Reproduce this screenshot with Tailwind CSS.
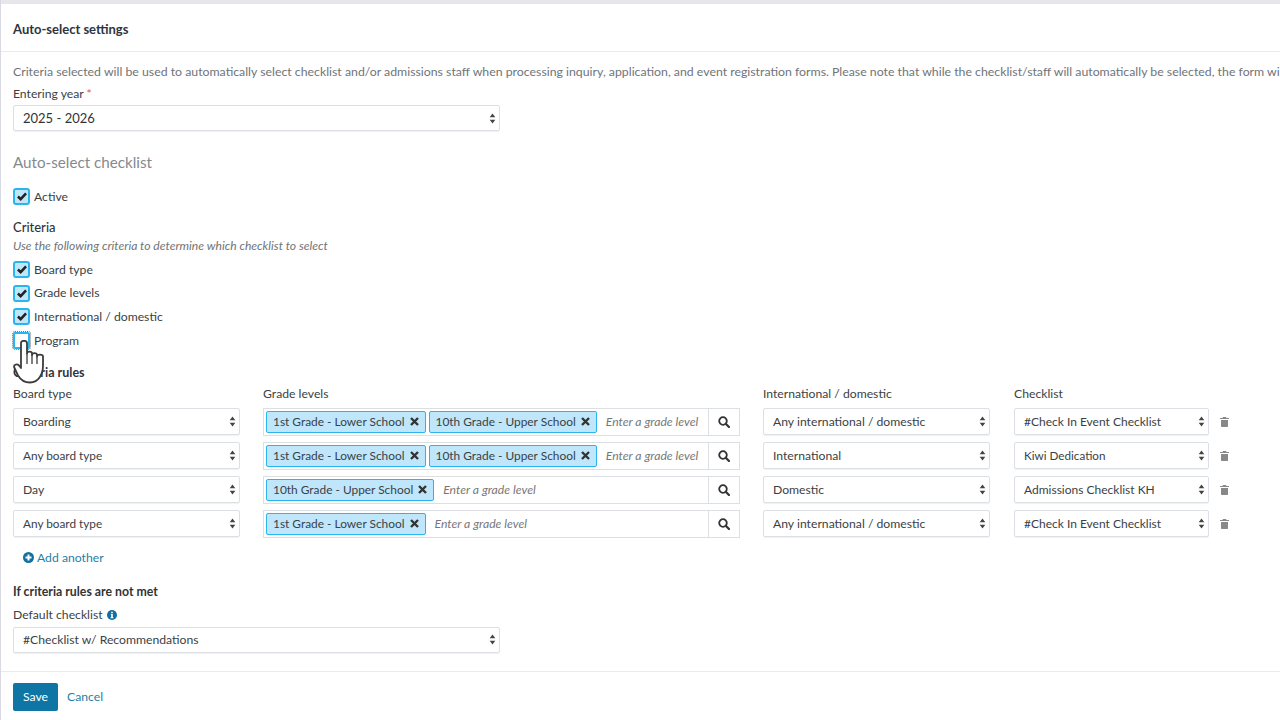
<!DOCTYPE html>
<html lang="en">
<head>
<meta charset="utf-8">
<title>Auto-select settings</title>
<script src="https://cdn.jsdelivr.net/npm/@tailwindcss/browser@4"></script>
</head>
<body class="bg-white">
<div class="relative w-[1280px] h-[720px] overflow-hidden font-['Lato',sans-serif] text-[12.2px] text-[#3a3f45] bg-white border-l border-[#d9d9e3]">
  <div class="h-1 bg-[#e6e6eb] -ml-px"></div>
  <header class="h-[48px] flex items-center pl-3 pt-[4px] border-b border-[#ebebee] font-bold text-[#2d3540] text-[13px]">Auto-select settings</header>

  <main class="pl-3">
    <p class="h-[34px] pt-[11px] leading-[17px] whitespace-nowrap text-[12.3px] text-[#6f7479]">Criteria selected will be used to automatically select checklist and/or admissions staff when processing inquiry, application, and event registration forms. Please note that while the checklist/staff will automatically be selected, the form will not be</p>
    <div class="h-[16px] leading-[16px]">Entering year <span class="text-[#e2504c]">*</span></div>
    <div class="mt-[3px] w-[487px] h-[26px] flex items-center justify-between pl-[9px] pr-[3px] border border-[#dcdfe3] rounded-[2px] shadow-[0_1px_1px_#0000000f] text-[13px] text-[#333]">
      <span class="pt-px">2025 - 2026</span>
      <svg class="w-[7px] h-[11px]" viewBox="0 0 7 11"><path fill="#444" d="M3.5 0.5 6.3 4.3H.7zM3.500 10.500 .7 6.700H6.300z"/></svg>
    </div>

    <h2 class="mt-[21px] h-[20px] leading-[20px] text-[15.2px] text-[#858a8f]">Auto-select checklist</h2>

    <label class="mt-[16px] h-[17px] flex items-center gap-[4px]">
      <span class="w-[17px] h-[17px] flex items-center justify-center bg-[#bfe6fb] border-2 border-[#2bb5ef] rounded-[3px]"><svg class="w-[10px] h-[9px]" viewBox="0 0 11 10"><path fill="none" stroke="#222" stroke-width="2.8" d="M1 5l3 3 6-6.500"/></svg></span>
      <span class="pt-px">Active</span>
    </label>

    <div class="mt-[14px] h-[17px] leading-[17px] font-medium text-[13px] text-[#2f353b]">Criteria</div>
    <p class="mt-[1px] h-[17px] leading-[17px] italic text-[12.1px] text-[#6f7479]">Use the following criteria to determine which checklist to select</p>

    <div class="mt-[7px] flex flex-col gap-[6.6px]">
      <label class="h-[17px] flex items-center gap-[4px]"><span class="w-[17px] h-[17px] flex items-center justify-center bg-[#bfe6fb] border-2 border-[#2bb5ef] rounded-[3px]"><svg class="w-[10px] h-[9px]" viewBox="0 0 11 10"><path fill="none" stroke="#222" stroke-width="2.8" d="M1 5l3 3 6-6.500"/></svg></span><span class="pt-px">Board type</span></label>
      <label class="h-[17px] flex items-center gap-[4px]"><span class="w-[17px] h-[17px] flex items-center justify-center bg-[#bfe6fb] border-2 border-[#2bb5ef] rounded-[3px]"><svg class="w-[10px] h-[9px]" viewBox="0 0 11 10"><path fill="none" stroke="#222" stroke-width="2.8" d="M1 5l3 3 6-6.500"/></svg></span><span class="pt-px">Grade levels</span></label>
      <label class="h-[17px] flex items-center gap-[4px]"><span class="w-[17px] h-[17px] flex items-center justify-center bg-[#bfe6fb] border-2 border-[#2bb5ef] rounded-[3px]"><svg class="w-[10px] h-[9px]" viewBox="0 0 11 10"><path fill="none" stroke="#222" stroke-width="2.8" d="M1 5l3 3 6-6.500"/></svg></span><span class="pt-px">International / domestic</span></label>
      <label class="h-[17px] flex items-center gap-[4px]"><span class="w-[17px] h-[17px] bg-white border-2 border-[#2bb5ef] outline-1 outline-dotted outline-[#777] rounded-[2px]"></span><span class="pt-px">Program</span></label>
    </div>

    <div class="mt-[15px] h-[17px] leading-[17px] font-bold text-[12.5px] text-[#2f353b]">Criteria rules</div>

    <div class="mt-[5px] flex flex-col gap-[7px] w-[1240px]">
      <div class="flex h-[15px] leading-[16px]">
        <div class="w-[227px]">Board type</div>
        <div class="ml-[23px] w-[477px]">Grade levels</div>
        <div class="ml-[23px] w-[227px]">International / domestic</div>
        <div class="ml-[24px]">Checklist</div>
      </div>

      <div class="flex items-center h-[27px]">
        <div class="w-[227px] h-[27px] flex items-center justify-between pl-[9px] pr-[3px] border border-[#dcdfe3] rounded-[2px] shadow-[0_1px_1px_#0000000f]"><span class="pt-px">Boarding</span><svg class="w-[7px] h-[11px]" viewBox="0 0 7 11"><path fill="#444" d="M3.5 0.5 6.3 4.3H.7zM3.500 10.500 .7 6.700H6.300z"/></svg></div>
        <div class="ml-[23px] w-[477px] h-[28px] self-start flex border border-[#dcdfe3]">
          <div class="flex-1 flex items-center pl-[2px] gap-[3px] min-w-0">
            <span class="h-[22px] flex items-center gap-[5px] px-[6px] bg-[#bfe6fb] border border-[#2bb5ef] rounded-[2px] whitespace-nowrap text-[11.9px]">1st Grade - Lower School <svg class="w-[9px] h-[9px]" viewBox="0 0 9 9"><path stroke="#333" stroke-width="2.4" d="M1 1l7 7M8 1l-7 7"/></svg></span>
            <span class="h-[22px] flex items-center gap-[5px] px-[6px] bg-[#bfe6fb] border border-[#2bb5ef] rounded-[2px] whitespace-nowrap text-[11.9px]">10th Grade - Upper School <svg class="w-[9px] h-[9px]" viewBox="0 0 9 9"><path stroke="#333" stroke-width="2.4" d="M1 1l7 7M8 1l-7 7"/></svg></span>
            <span class="ml-[6px] italic text-[12.2px] text-[#777] whitespace-nowrap">Enter a grade level</span>
          </div>
          <div class="w-[31px] flex items-center justify-center border-l border-[#dcdfe3]"><svg class="w-[12px] h-[12px]" viewBox="0 0 12 12"><circle cx="5" cy="5" r="3.8" fill="none" stroke="#333" stroke-width="1.8"/><path stroke="#333" stroke-width="2.2" stroke-linecap="round" d="M8 8l3 3"/></svg></div>
        </div>
        <div class="ml-[23px] w-[227px] h-[27px] flex items-center justify-between pl-[9px] pr-[3px] border border-[#dcdfe3] rounded-[2px] shadow-[0_1px_1px_#0000000f]"><span class="pt-px">Any international / domestic</span><svg class="w-[7px] h-[11px]" viewBox="0 0 7 11"><path fill="#444" d="M3.5 0.5 6.3 4.3H.7zM3.500 10.500 .7 6.700H6.300z"/></svg></div>
        <div class="ml-[24px] w-[195px] h-[27px] flex items-center justify-between pl-[9px] pr-[3px] border border-[#dcdfe3] rounded-[2px] shadow-[0_1px_1px_#0000000f] text-[12px]"><span class="pt-px">#Check In Event Checklist</span><svg class="w-[7px] h-[11px]" viewBox="0 0 7 11"><path fill="#444" d="M3.5 0.5 6.3 4.3H.7zM3.500 10.500 .7 6.700H6.300z"/></svg></div>
        <svg class="ml-[11px] mt-px w-[9px] h-[10px]" viewBox="0 0 9 10"><path fill="#888" d="M3 0h3l.5 1H9v1H0V1h2.500zM1 3h7v6.200a.8.8 0 0 1-.8.8H1.800a.8.8 0 0 1-.8-.8z"/></svg>
      </div>

      <div class="flex items-center h-[27px]">
        <div class="w-[227px] h-[27px] flex items-center justify-between pl-[9px] pr-[3px] border border-[#dcdfe3] rounded-[2px] shadow-[0_1px_1px_#0000000f] text-[11.8px]"><span class="pt-px">Any board type</span><svg class="w-[7px] h-[11px]" viewBox="0 0 7 11"><path fill="#444" d="M3.5 0.5 6.3 4.3H.7zM3.500 10.500 .7 6.700H6.300z"/></svg></div>
        <div class="ml-[23px] w-[477px] h-[28px] self-start flex border border-[#dcdfe3]">
          <div class="flex-1 flex items-center pl-[2px] gap-[3px] min-w-0">
            <span class="h-[22px] flex items-center gap-[5px] px-[6px] bg-[#bfe6fb] border border-[#2bb5ef] rounded-[2px] whitespace-nowrap text-[11.9px]">1st Grade - Lower School <svg class="w-[9px] h-[9px]" viewBox="0 0 9 9"><path stroke="#333" stroke-width="2.4" d="M1 1l7 7M8 1l-7 7"/></svg></span>
            <span class="h-[22px] flex items-center gap-[5px] px-[6px] bg-[#bfe6fb] border border-[#2bb5ef] rounded-[2px] whitespace-nowrap text-[11.9px]">10th Grade - Upper School <svg class="w-[9px] h-[9px]" viewBox="0 0 9 9"><path stroke="#333" stroke-width="2.4" d="M1 1l7 7M8 1l-7 7"/></svg></span>
            <span class="ml-[6px] italic text-[12.2px] text-[#777] whitespace-nowrap">Enter a grade level</span>
          </div>
          <div class="w-[31px] flex items-center justify-center border-l border-[#dcdfe3]"><svg class="w-[12px] h-[12px]" viewBox="0 0 12 12"><circle cx="5" cy="5" r="3.8" fill="none" stroke="#333" stroke-width="1.8"/><path stroke="#333" stroke-width="2.2" stroke-linecap="round" d="M8 8l3 3"/></svg></div>
        </div>
        <div class="ml-[23px] w-[227px] h-[27px] flex items-center justify-between pl-[9px] pr-[3px] border border-[#dcdfe3] rounded-[2px] shadow-[0_1px_1px_#0000000f]"><span class="pt-px">International</span><svg class="w-[7px] h-[11px]" viewBox="0 0 7 11"><path fill="#444" d="M3.5 0.5 6.3 4.3H.7zM3.500 10.500 .7 6.700H6.300z"/></svg></div>
        <div class="ml-[24px] w-[195px] h-[27px] flex items-center justify-between pl-[9px] pr-[3px] border border-[#dcdfe3] rounded-[2px] shadow-[0_1px_1px_#0000000f] text-[11.7px]"><span class="pt-px">Kiwi Dedication</span><svg class="w-[7px] h-[11px]" viewBox="0 0 7 11"><path fill="#444" d="M3.5 0.5 6.3 4.3H.7zM3.500 10.500 .7 6.700H6.300z"/></svg></div>
        <svg class="ml-[11px] mt-px w-[9px] h-[10px]" viewBox="0 0 9 10"><path fill="#888" d="M3 0h3l.5 1H9v1H0V1h2.500zM1 3h7v6.200a.8.8 0 0 1-.8.8H1.800a.8.8 0 0 1-.8-.8z"/></svg>
      </div>

      <div class="flex items-center h-[27px]">
        <div class="w-[227px] h-[27px] flex items-center justify-between pl-[9px] pr-[3px] border border-[#dcdfe3] rounded-[2px] shadow-[0_1px_1px_#0000000f]"><span class="pt-px">Day</span><svg class="w-[7px] h-[11px]" viewBox="0 0 7 11"><path fill="#444" d="M3.5 0.5 6.3 4.3H.7zM3.500 10.500 .7 6.700H6.300z"/></svg></div>
        <div class="ml-[23px] w-[477px] h-[28px] self-start flex border border-[#dcdfe3]">
          <div class="flex-1 flex items-center pl-[2px] gap-[3px] min-w-0">
            <span class="h-[22px] flex items-center gap-[5px] px-[6px] bg-[#bfe6fb] border border-[#2bb5ef] rounded-[2px] whitespace-nowrap text-[11.9px]">10th Grade - Upper School <svg class="w-[9px] h-[9px]" viewBox="0 0 9 9"><path stroke="#333" stroke-width="2.4" d="M1 1l7 7M8 1l-7 7"/></svg></span>
            <span class="ml-[6px] italic text-[12.2px] text-[#777] whitespace-nowrap">Enter a grade level</span>
          </div>
          <div class="w-[31px] flex items-center justify-center border-l border-[#dcdfe3]"><svg class="w-[12px] h-[12px]" viewBox="0 0 12 12"><circle cx="5" cy="5" r="3.8" fill="none" stroke="#333" stroke-width="1.8"/><path stroke="#333" stroke-width="2.2" stroke-linecap="round" d="M8 8l3 3"/></svg></div>
        </div>
        <div class="ml-[23px] w-[227px] h-[27px] flex items-center justify-between pl-[9px] pr-[3px] border border-[#dcdfe3] rounded-[2px] shadow-[0_1px_1px_#0000000f]"><span class="pt-px">Domestic</span><svg class="w-[7px] h-[11px]" viewBox="0 0 7 11"><path fill="#444" d="M3.5 0.5 6.3 4.3H.7zM3.500 10.500 .7 6.700H6.300z"/></svg></div>
        <div class="ml-[24px] w-[195px] h-[27px] flex items-center justify-between pl-[9px] pr-[3px] border border-[#dcdfe3] rounded-[2px] shadow-[0_1px_1px_#0000000f] text-[12px]"><span class="pt-px">Admissions Checklist KH</span><svg class="w-[7px] h-[11px]" viewBox="0 0 7 11"><path fill="#444" d="M3.5 0.5 6.3 4.3H.7zM3.500 10.500 .7 6.700H6.300z"/></svg></div>
        <svg class="ml-[11px] mt-px w-[9px] h-[10px]" viewBox="0 0 9 10"><path fill="#888" d="M3 0h3l.5 1H9v1H0V1h2.500zM1 3h7v6.200a.8.8 0 0 1-.8.8H1.800a.8.8 0 0 1-.8-.8z"/></svg>
      </div>

      <div class="flex items-center h-[27px]">
        <div class="w-[227px] h-[27px] flex items-center justify-between pl-[9px] pr-[3px] border border-[#dcdfe3] rounded-[2px] shadow-[0_1px_1px_#0000000f] text-[11.8px]"><span class="pt-px">Any board type</span><svg class="w-[7px] h-[11px]" viewBox="0 0 7 11"><path fill="#444" d="M3.5 0.5 6.3 4.3H.7zM3.500 10.500 .7 6.700H6.300z"/></svg></div>
        <div class="ml-[23px] w-[477px] h-[28px] self-start flex border border-[#dcdfe3]">
          <div class="flex-1 flex items-center pl-[2px] gap-[3px] min-w-0">
            <span class="h-[22px] flex items-center gap-[5px] px-[6px] bg-[#bfe6fb] border border-[#2bb5ef] rounded-[2px] whitespace-nowrap text-[11.9px]">1st Grade - Lower School <svg class="w-[9px] h-[9px]" viewBox="0 0 9 9"><path stroke="#333" stroke-width="2.4" d="M1 1l7 7M8 1l-7 7"/></svg></span>
            <span class="ml-[6px] italic text-[12.2px] text-[#777] whitespace-nowrap">Enter a grade level</span>
          </div>
          <div class="w-[31px] flex items-center justify-center border-l border-[#dcdfe3]"><svg class="w-[12px] h-[12px]" viewBox="0 0 12 12"><circle cx="5" cy="5" r="3.8" fill="none" stroke="#333" stroke-width="1.8"/><path stroke="#333" stroke-width="2.2" stroke-linecap="round" d="M8 8l3 3"/></svg></div>
        </div>
        <div class="ml-[23px] w-[227px] h-[27px] flex items-center justify-between pl-[9px] pr-[3px] border border-[#dcdfe3] rounded-[2px] shadow-[0_1px_1px_#0000000f]"><span class="pt-px">Any international / domestic</span><svg class="w-[7px] h-[11px]" viewBox="0 0 7 11"><path fill="#444" d="M3.5 0.5 6.3 4.3H.7zM3.500 10.500 .7 6.700H6.300z"/></svg></div>
        <div class="ml-[24px] w-[195px] h-[27px] flex items-center justify-between pl-[9px] pr-[3px] border border-[#dcdfe3] rounded-[2px] shadow-[0_1px_1px_#0000000f] text-[12px]"><span class="pt-px">#Check In Event Checklist</span><svg class="w-[7px] h-[11px]" viewBox="0 0 7 11"><path fill="#444" d="M3.5 0.5 6.3 4.3H.7zM3.500 10.500 .7 6.700H6.300z"/></svg></div>
        <svg class="ml-[11px] mt-px w-[9px] h-[10px]" viewBox="0 0 9 10"><path fill="#888" d="M3 0h3l.5 1H9v1H0V1h2.500zM1 3h7v6.200a.8.8 0 0 1-.8.8H1.800a.8.8 0 0 1-.8-.8z"/></svg>
      </div>
    </div>

    <a class="mt-[13px] ml-[10px] h-[16px] flex items-center gap-[3px] text-[#1f7fa9]">
      <svg class="w-[11px] h-[11px]" viewBox="0 0 11 11"><circle cx="5.5" cy="5.5" r="5.5" fill="#126f9e"/><path stroke="#fff" stroke-width="2" d="M2.500 5.500h6M5.500 2.500v6"/></svg>
      Add another
    </a>

    <div class="mt-[18px] h-[16px] leading-[16px] font-bold text-[12.3px] text-[#333]">If criteria rules are not met</div>
    <div class="mt-[7px] h-[16px] flex items-center gap-[4px]">Default checklist
      <svg class="w-[10px] h-[10px]" viewBox="0 0 10 10"><circle cx="5" cy="5" r="5" fill="#126f9e"/><path fill="#fff" d="M4.200 1.800h1.600v1.400H4.200zM3.800 4h2v3.300h.6v1H3.600v-1h.6V5h-.4z"/></svg>
    </div>
    <div class="mt-[4px] w-[487px] h-[26px] flex items-center justify-between pl-[9px] pr-[3px] border border-[#dcdfe3] rounded-[2px] shadow-[0_1px_1px_#0000000f]">
      <span class="pt-px">#Checklist w/ Recommendations</span>
      <svg class="w-[7px] h-[11px]" viewBox="0 0 7 11"><path fill="#444" d="M3.5 0.5 6.3 4.3H.7zM3.500 10.500 .7 6.700H6.300z"/></svg>
    </div>
  </main>

  <footer class="mt-[18px] pt-[11px] pl-3 border-t border-[#ebebee] flex items-center gap-[9px]">
    <button class="w-[45px] h-[28px] rounded-[2px] bg-[#0e75a5] text-white">Save</button>
    <a class="text-[#1f7fa9]">Cancel</a>
  </footer>

  <svg class="absolute left-[12px] top-[340px] w-[34px] h-[46px]" viewBox="0 0 34 46">
    <path fill="#fff" stroke="#3c3c3c" stroke-width="1.800" stroke-linejoin="round" d="M8 3c0-3 6-3 6 0v10.500c0-2.500 5-2.500 5 0v1.500c0-2.500 5-2.500 5 0v1.500c0-2.500 6-2.500 6 0v9c0 8-4 17-13 17-6 0-9-2-12-7L1.500 28c-1.500-3 2-5 4.500-2.500L8 28z"/>
    <path fill="none" stroke="#3c3c3c" stroke-width="1.300" d="M14 13.500V24M19 15v9M24 16.500V24"/>
  </svg>
</div>
</body>
</html>
